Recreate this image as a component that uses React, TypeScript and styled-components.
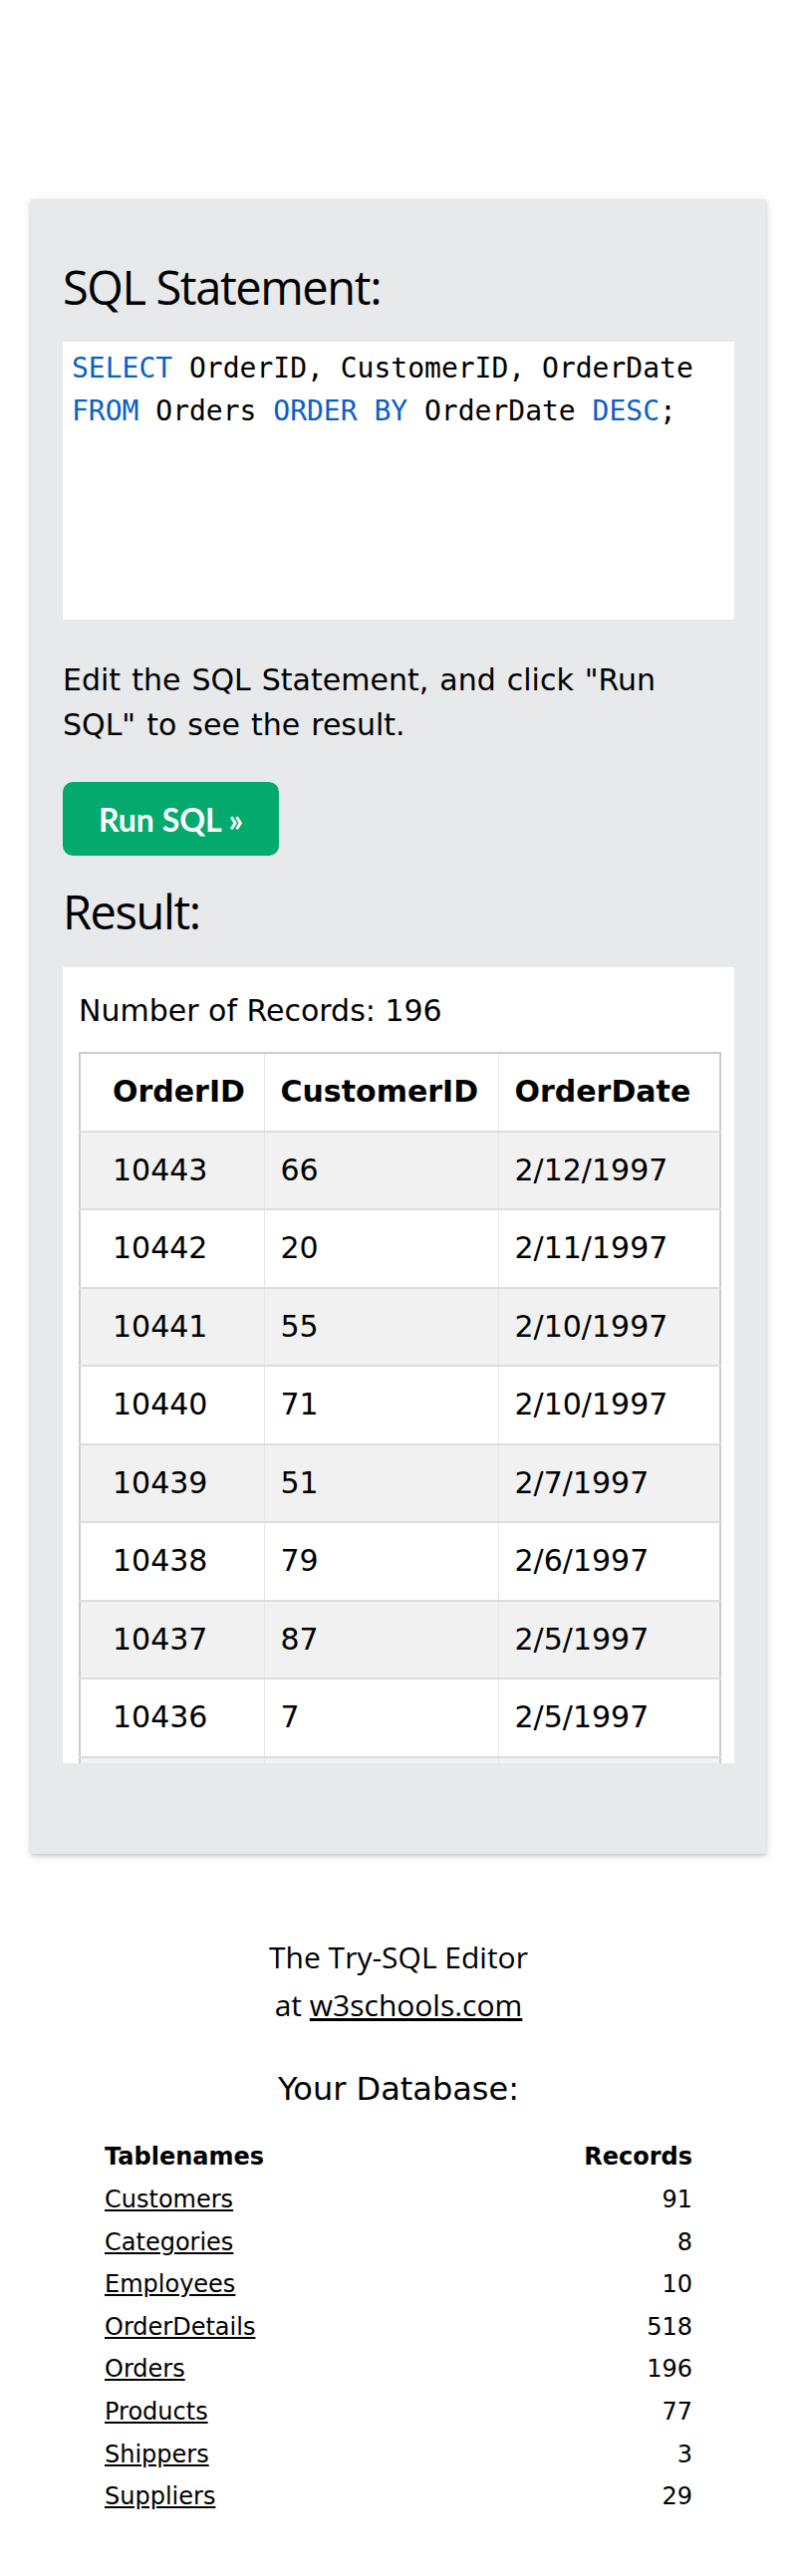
import React from "react";
import styled, { createGlobalStyle } from "styled-components";

const GlobalStyle = createGlobalStyle`
  html, body {
    margin: 0;
    padding: 0;
    background: #ffffff;
    color: #000000;
    font-family: "DejaVu Sans", Verdana, sans-serif;
  }
`;

const Page = styled.div`
  padding-top: 200px;
  padding-bottom: 60px;
`;

const Panel = styled.section`
  margin: 0 31px;
  padding: 60px 32px 91px;
  background: #e7e9eb;
  box-shadow: 0 2px 4px rgba(0, 0, 0, 0.16), 0 2px 10px rgba(0, 0, 0, 0.1);
`;

const Heading = styled.h3<{ $gap?: number }>`
  margin: ${({ $gap }) => $gap ?? 0}px 0 0;
  font-family: "Open Sans", "Noto Sans", sans-serif;
  font-weight: 400;
  font-size: 47px;
  line-height: 56px;
  letter-spacing: -1.4px;
`;

const CodeBox = styled.pre`
  margin: 27px 0 0;
  height: 279px;
  box-sizing: border-box;
  padding: 5px 9px;
  background: #ffffff;
  font-family: "DejaVu Sans Mono", "Liberation Mono", monospace;
  font-size: 28px;
  line-height: 43px;
  white-space: pre-wrap;
`;

const Keyword = styled.span`
  color: #0a5ec8;
`;

const Hint = styled.p`
  margin: 38px 0 0;
  font-size: 30px;
  line-height: 45px;
  word-spacing: 1.5px;
`;

const RunButton = styled.button`
  display: flex;
  align-items: center;
  justify-content: center;
  margin-top: 35px;
  height: 74px;
  width: 217px;
  padding: 0;
  border: none;
  border-radius: 10px;
  background: #04aa6d;
  color: #ffffff;
  font-family: Lato, "Open Sans", sans-serif;
  font-weight: 700;
  font-size: 32px;
  cursor: pointer;
`;

const ResultBox = styled.div`
  margin-top: 28px;
  height: 799px;
  overflow: hidden;
  box-sizing: border-box;
  padding: 21px 16px 0;
  background: #ffffff;
`;

const Count = styled.div`
  font-size: 30px;
  line-height: 45px;
`;

const Table = styled.table`
  margin-top: 19px;
  width: 643px;
  table-layout: fixed;
  border-collapse: collapse;
  border: 2px solid #cccccc;
  font-size: 30px;

  th, td {
    padding: 16px 4px 16px 16px;
    line-height: 44.5px;
    text-align: left;
    white-space: nowrap;
    border-left: 1px solid #e6e6e6;
  }

  th:first-child, td:first-child {
    padding-left: 32px;
    border-left: none;
  }

  th {
    font-weight: 700;
  }
`;

const Row = styled.tr<{ $striped?: boolean }>`
  background: ${({ $striped }) => ($striped ? "#f1f1f1" : "#ffffff")};
  border-bottom: 2px solid #dddddd;
`;

const Footer = styled.footer`
  margin-top: 80px;
  text-align: center;
`;

const Credit = styled.div`
  font-family: "Open Sans", "Noto Sans", sans-serif;
  font-size: 30px;
  line-height: 48px;
`;

const Link = styled.a`
  color: #000000;
  text-decoration: underline;
`;

const DbTitle = styled.div`
  margin-top: 37px;
  font-size: 32px;
  line-height: 46px;
`;

const DbTable = styled.table`
  margin: 23px auto 0;
  width: 590px;
  border-collapse: collapse;
  font-size: 24px;

  th, td {
    padding: 0;
    text-align: left;
    line-height: 42.6px;
  }

  th {
    line-height: 44px;
    font-weight: 700;
  }

  th:last-child, td:last-child {
    text-align: right;
  }
`;

const orders = [
  ["10443", "66", "2/12/1997"],
  ["10442", "20", "2/11/1997"],
  ["10441", "55", "2/10/1997"],
  ["10440", "71", "2/10/1997"],
  ["10439", "51", "2/7/1997"],
  ["10438", "79", "2/6/1997"],
  ["10437", "87", "2/5/1997"],
  ["10436", "7", "2/5/1997"],
];

const tables = [
  ["Customers", 91],
  ["Categories", 8],
  ["Employees", 10],
  ["OrderDetails", 518],
  ["Orders", 196],
  ["Products", 77],
  ["Shippers", 3],
  ["Suppliers", 29],
];

const App = () => {
  return (
    <>
      <GlobalStyle />
      <Page>
        <Panel>
          <Heading>SQL Statement:</Heading>
          <CodeBox>
            <Keyword>SELECT</Keyword> OrderID, CustomerID, OrderDate{"\n"}
            <Keyword>FROM</Keyword> Orders <Keyword>ORDER BY</Keyword> OrderDate <Keyword>DESC</Keyword>;
          </CodeBox>
          <Hint>Edit the SQL Statement, and click "Run SQL" to see the result.</Hint>
          <RunButton>Run SQL »</RunButton>
          <Heading $gap={28}>Result:</Heading>
          <ResultBox>
            <Count>Number of Records: 196</Count>
            <Table>
              <colgroup>
                <col style={{ width: 185 }} />
                <col style={{ width: 235 }} />
                <col style={{ width: 223 }} />
              </colgroup>
              <thead>
                <Row>
                  <th>OrderID</th>
                  <th>CustomerID</th>
                  <th>OrderDate</th>
                </Row>
              </thead>
              <tbody>
                {orders.map((o, i) => (
                  <Row key={o[0]} $striped={i % 2 === 0}>
                    <td>{o[0]}</td>
                    <td>{o[1]}</td>
                    <td>{o[2]}</td>
                  </Row>
                ))}
                {/* top edge of the next row, scrolled out of view */}
                <Row $striped>
                  <td />
                  <td />
                  <td />
                </Row>
              </tbody>
            </Table>
          </ResultBox>
        </Panel>

        <Footer>
          <Credit>
            The Try-SQL Editor
            <br />
            at <Link href="#">w3schools.com</Link>
          </Credit>
          <DbTitle>Your Database:</DbTitle>
          <DbTable>
            <thead>
              <tr>
                <th>Tablenames</th>
                <th>Records</th>
              </tr>
            </thead>
            <tbody>
              {tables.map(([name, count]) => (
                <tr key={name}>
                  <td>
                    <Link href="#">{name}</Link>
                  </td>
                  <td>{count}</td>
                </tr>
              ))}
            </tbody>
          </DbTable>
        </Footer>
      </Page>
    </>
  );
};

export default App;
